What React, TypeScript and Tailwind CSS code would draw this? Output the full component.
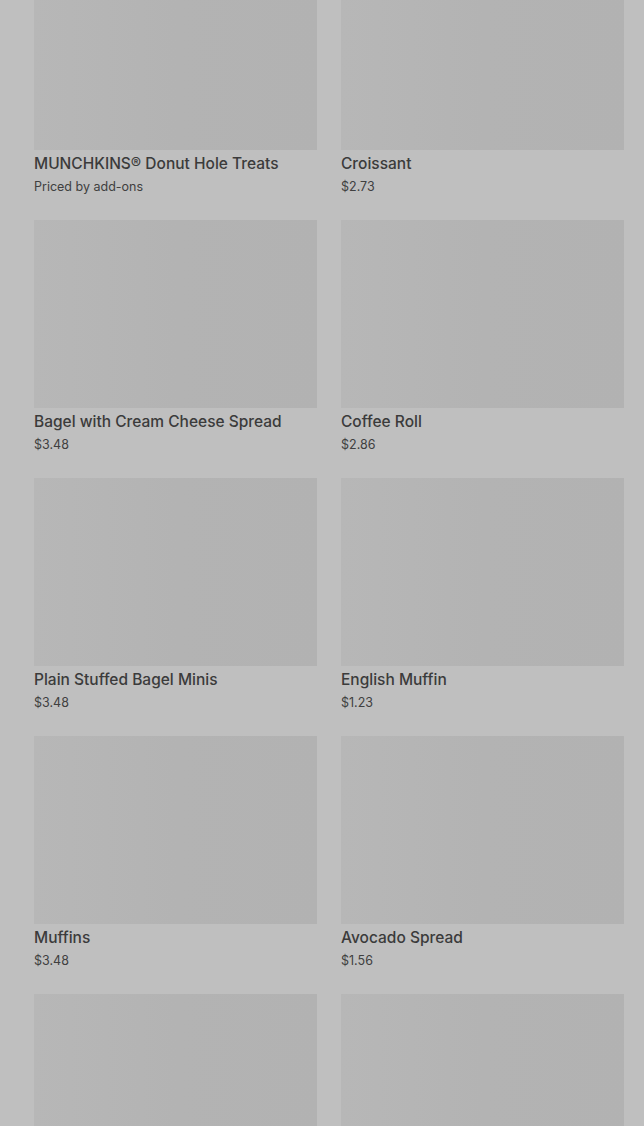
const ITEMS = [
  { name: 'MUNCHKINS® Donut Hole Treats', price: 'Priced by add-ons' },
  { name: 'Croissant', price: '$2.73' },
  { name: 'Bagel with Cream Cheese Spread', price: '$3.48' },
  { name: 'Coffee Roll', price: '$2.86' },
  { name: 'Plain Stuffed Bagel Minis', price: '$3.48' },
  { name: 'English Muffin', price: '$1.23' },
  { name: 'Muffins', price: '$3.48' },
  { name: 'Avocado Spread', price: '$1.56' },
  { name: '', price: '' },
  { name: '', price: '' },
];

function ItemCard({ name, price }: { name: string; price: string }) {
  return (
    <div className="flex flex-col">
      <div className="h-[188px] w-full bg-gradient-to-r from-[#b7b7b7] via-[#b3b3b3] to-[#b2b2b2]" />
      {name && (
        <>
          <div className="mt-[4px] text-[15.5px] leading-[20px] font-medium text-[#3b3b3b] truncate">{name}</div>
          <div className="mt-[4px] text-[12.5px] leading-[18px] text-[#404040]">{price}</div>
        </>
      )}
    </div>
  );
}

export default function App() {
  return (
    <div
      className="h-[1126px] w-full overflow-hidden bg-[#bfbfbf]"
      style={{ fontFamily: 'Inter, "Noto Sans", sans-serif' }}
    >
      <div className="-mt-[38px] pl-[34px] pr-[20px] grid grid-cols-2 gap-x-[24px] gap-y-[24px]">
        {ITEMS.map((item, i) => (
          <ItemCard key={i} name={item.name} price={item.price} />
        ))}
      </div>
    </div>
  );
}
